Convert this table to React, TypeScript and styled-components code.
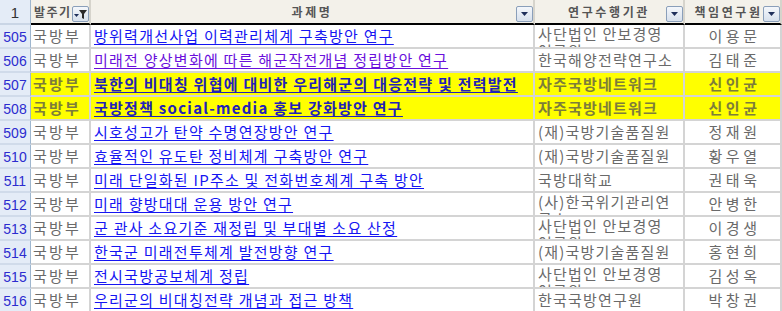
import { FC, Fragment } from "react";
import styled, { createGlobalStyle, css } from "styled-components";

const GlobalStyle = createGlobalStyle`
  html, body {
    margin: 0;
    padding: 0;
    background: #ffffff;
    overflow: hidden;
  }
`;

const KR = `"Noto Sans CJK KR", "Noto Sans", sans-serif`;

const Sheet = styled.div`
  display: grid;
  grid-template-columns: 31px 60px 444px 150px 97px;
  grid-auto-rows: 24px;
  grid-template-rows: 25px;
  width: 782px;
  height: 311px;
  overflow: hidden;
  font-family: ${KR};
`;

const RowHead = styled.div<{ $top?: boolean }>`
  box-sizing: border-box;
  display: flex;
  align-items: center;
  justify-content: center;
  background: #e4ecf7;
  border-right: 1px solid #9eb6ce;
  border-bottom: 2px solid ${({ $top }) => ($top ? "#c9d5e5" : "#d0dbea")};
  font-family: "Liberation Sans", Arial, sans-serif;
  font-size: ${({ $top }) => ($top ? "15px" : "14px")};
  color: ${({ $top }) => ($top ? "#333333" : "#2c2ccf")};
  padding-top: 1px;
`;

const HeadCell = styled.div<{ $align?: "left" | "center" }>`
  box-sizing: border-box;
  position: relative;
  display: flex;
  align-items: center;
  justify-content: ${({ $align }) => ($align === "left" ? "flex-start" : "center")};
  padding-left: ${({ $align }) => ($align === "left" ? "3px" : "0")};
  background: #f3f1ea;
  border-right: 2px solid #d6d4cc;
  border-bottom: 2px solid #000000;
  font-size: 12px;
  font-weight: 700;
  letter-spacing: ${({ $align }) => ($align === "left" ? "1.5px" : "2.6px")};
  color: #555555;
`;

const HeadLabel = styled.span<{ $shift?: number }>`
  margin-left: ${({ $shift }) => $shift ?? 0}px;
`;

const DropButton = styled.span`
  position: absolute;
  right: 0;
  bottom: 1px;
  box-sizing: border-box;
  width: 17px;
  height: 16px;
  border: 1px solid #8a9fba;
  border-radius: 2px;
  background: linear-gradient(#f4f7fb, #d7e0ec);
  display: flex;
  align-items: center;
  justify-content: center;
`;

const Cell = styled.div<{ $yellow?: boolean; $align?: "left" | "center" }>`
  box-sizing: border-box;
  display: flex;
  align-items: center;
  justify-content: ${({ $align }) => ($align === "center" ? "center" : "flex-start")};
  padding-left: ${({ $align }) => ($align === "center" ? "4px" : "2px")};
  border-right: 2px solid #d4d4d4;
  border-bottom: 2px solid #d4d4d4;
  background: ${({ $yellow }) => ($yellow ? "#ffff00" : "#ffffff")};
  font-size: 15px;
  line-height: 22px;
  white-space: nowrap;
  overflow: hidden;
  color: ${({ $yellow }) => ($yellow ? "#7d7d3a" : "#6a6a6a")};
  font-weight: ${({ $yellow }) => ($yellow ? 700 : 400)};
  letter-spacing: ${({ $align }) => ($align === "center" ? "3.5px" : "2.2px")};
`;

const TitleCell = styled(Cell)`
  padding-left: 3px;
  letter-spacing: 1.25px;
`;

const InstCell = styled(Cell)<{ $wrapped?: boolean }>`
  padding-left: 3px;
  letter-spacing: 1.2px;
  ${({ $wrapped }) =>
    $wrapped &&
    css`
      display: block;
      white-space: pre-line;
      line-height: 17px;
    `}
`;

const Link = styled.span<{ $visited?: boolean; $bold?: boolean }>`
  color: ${({ $visited, $bold }) => ($bold ? "#2222b8" : $visited ? "#6a10dc" : "#1515f2")};
  text-decoration: underline;
  text-underline-offset: 2px;
  ${({ $bold }) =>
    $bold &&
    css`
      font-weight: 700;
    `}
`;

type Row = {
  no: number;
  org: string;
  title: string;
  inst: string;
  lead: string;
  yellow?: boolean;
  visited?: boolean;
};

const rows: Row[] = [
  { no: 505, org: "국방부", title: "방위력개선사업 이력관리체계 구축방안 연구", inst: "사단법인 안보경영\n연구원", lead: "이용문" },
  { no: 506, org: "국방부", title: "미래전 양상변화에 따른 해군작전개념 정립방안 연구", inst: "한국해양전략연구소", lead: "김태준", visited: true },
  { no: 507, org: "국방부", title: "북한의 비대칭 위협에 대비한 우리해군의 대응전략 및 전력발전", inst: "자주국방네트워크", lead: "신인균", yellow: true },
  { no: 508, org: "국방부", title: "국방정책 social-media 홍보 강화방안 연구", inst: "자주국방네트워크", lead: "신인균", yellow: true },
  { no: 509, org: "국방부", title: "시호성고가 탄약 수명연장방안 연구", inst: "(재)국방기술품질원", lead: "정재원" },
  { no: 510, org: "국방부", title: "효율적인 유도탄 정비체계 구축방안 연구", inst: "(재)국방기술품질원", lead: "황우열" },
  { no: 511, org: "국방부", title: "미래 단일화된 IP주소 및 전화번호체계 구축 방안", inst: "국방대학교", lead: "권태욱" },
  { no: 512, org: "국방부", title: "미래 향방대대 운용 방안 연구", inst: "(사)한국위기관리연\n구소", lead: "안병한" },
  { no: 513, org: "국방부", title: "군 관사 소요기준 재정립 및 부대별 소요 산정", inst: "사단법인 안보경영\n연구원", lead: "이경생" },
  { no: 514, org: "국방부", title: "한국군 미래전투체계 발전방향 연구", inst: "(재)국방기술품질원", lead: "홍현희" },
  { no: 515, org: "국방부", title: "전시국방공보체계 정립", inst: "사단법인 안보경영\n연구원", lead: "김성옥" },
  { no: 516, org: "국방부", title: "우리군의 비대칭전략 개념과 접근 방책", inst: "한국국방연구원", lead: "박창권" },
];

const Arrow: FC = () => (
  <svg width="7" height="4" viewBox="0 0 7 4">
    <path d="M0 0 H7 L3.5 4 Z" fill="#1f2f5a" />
  </svg>
);

const FilterIcon: FC = () => (
  <svg width="13" height="11" viewBox="0 0 13 11">
    <path d="M0 5 H5 L2.5 8 Z" fill="#1f2f5a" />
    <path d="M5 1 H13 L10 5 V10 L8 9 V5 Z" fill="#2a2a2a" />
  </svg>
);

const App: FC = () => (
  <>
    <GlobalStyle />
    <Sheet>
      <RowHead $top>1</RowHead>
      <HeadCell $align="left">
        <HeadLabel>발주기</HeadLabel>
        <DropButton>
          <FilterIcon />
        </DropButton>
      </HeadCell>
      <HeadCell>
        <HeadLabel>과제명</HeadLabel>
        <DropButton>
          <Arrow />
        </DropButton>
      </HeadCell>
      <HeadCell>
        <HeadLabel>연구수행기관</HeadLabel>
        <DropButton>
          <Arrow />
        </DropButton>
      </HeadCell>
      <HeadCell>
        <HeadLabel $shift={-8}>책임연구원</HeadLabel>
        <DropButton>
          <Arrow />
        </DropButton>
      </HeadCell>

      {rows.map((r) => (
        <Fragment key={r.no}>
          <RowHead>{r.no}</RowHead>
          <Cell $yellow={r.yellow}>{r.org}</Cell>
          <TitleCell $yellow={r.yellow}>
            <Link $visited={r.visited} $bold={r.yellow}>
              {r.title}
            </Link>
          </TitleCell>
          <InstCell $yellow={r.yellow} $wrapped={r.inst.includes("\n")}>
            {r.inst}
          </InstCell>
          <Cell $yellow={r.yellow} $align="center">
            {r.lead}
          </Cell>
        </Fragment>
      ))}
    </Sheet>
  </>
);

export default App;
